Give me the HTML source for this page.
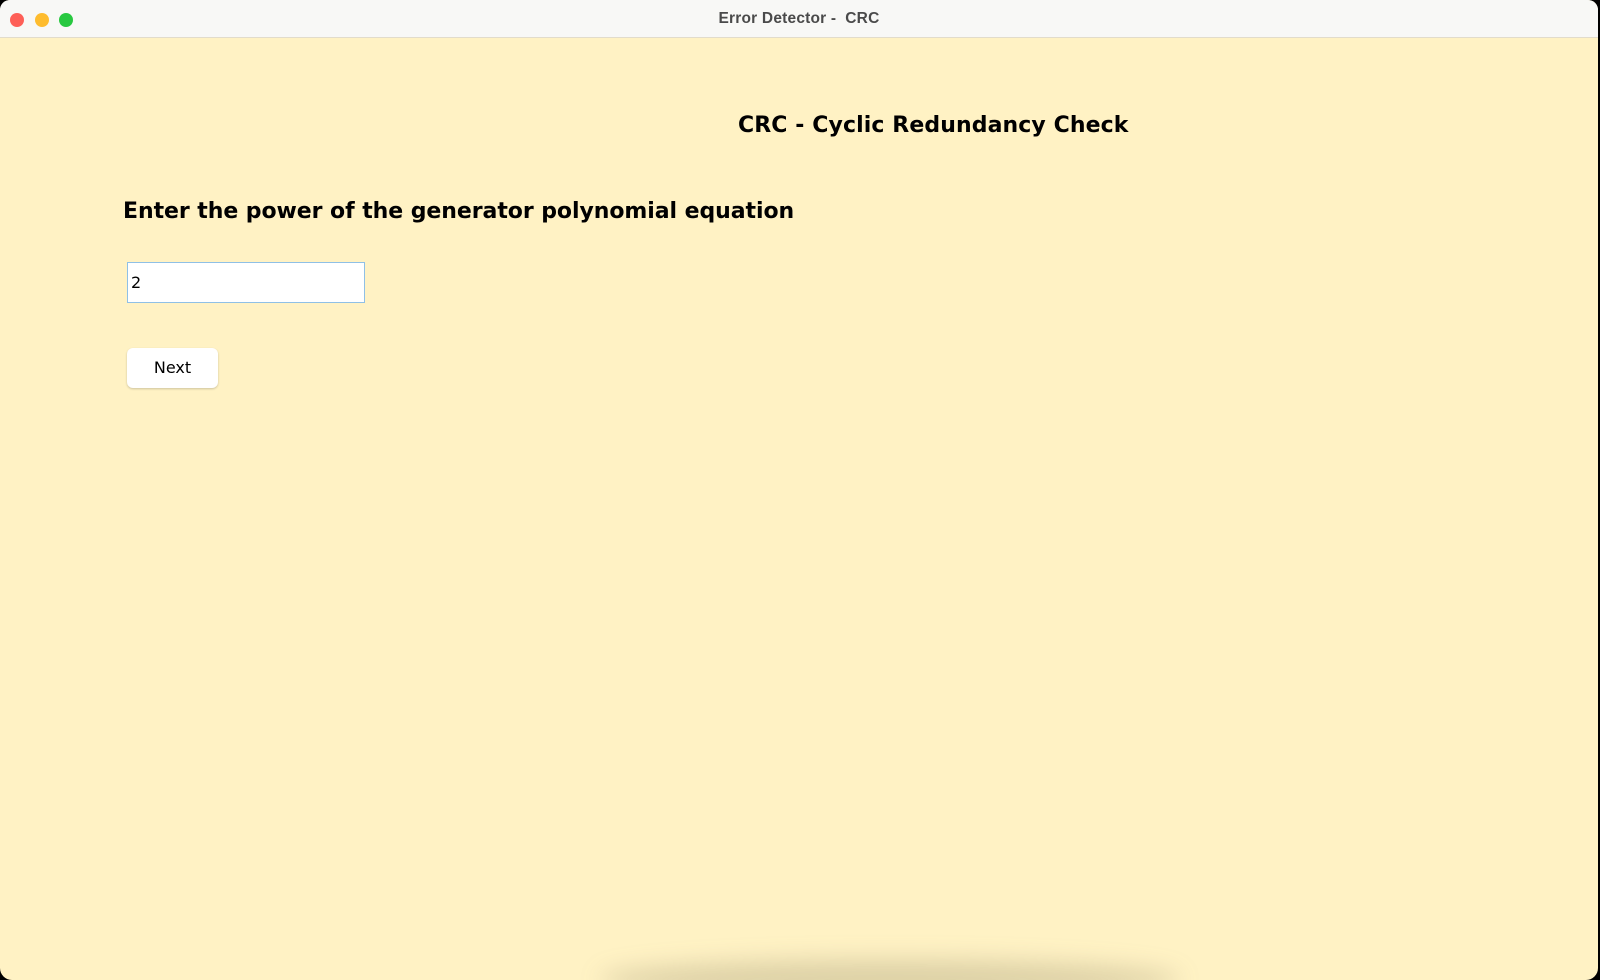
<!DOCTYPE html>
<html><head><style>
html,body{margin:0;padding:0;width:1600px;height:980px;overflow:hidden;background:#000;}
.win{position:absolute;left:0;top:0;width:1598px;height:980px;background:#fff2c4;border-radius:10px 10px 12px 12px;overflow:hidden;}
.bar{position:absolute;left:0;top:0;width:100%;height:37px;background:#f8f8f6;border-bottom:1px solid #e2dccb;}
.dot{position:absolute;top:13px;width:14px;height:14px;border-radius:50%;}
.t{position:absolute;left:0;width:100%;text-align:center;top:10px;font:bold 15.5px "Liberation Sans",sans-serif;color:#4a4a4a;letter-spacing:0.2px;}
.h{position:absolute;font-family:"DejaVu Sans",sans-serif;font-weight:bold;color:#000;white-space:nowrap;}
.inp{position:absolute;left:127px;top:262px;width:238px;height:41px;background:#fff;border:1px solid #8fc0e6;box-sizing:border-box;font:16px "DejaVu Sans",sans-serif;line-height:39px;padding-left:3px;}
.btn{position:absolute;left:127px;top:348px;width:91px;height:40px;background:#fff;border-radius:6px;box-shadow:0 1px 2px rgba(0,0,0,.2);text-align:center;font:16px "DejaVu Sans",sans-serif;line-height:40px;}
.sh{position:absolute;left:600px;top:960px;width:580px;height:40px;border-radius:50%;background:rgba(120,110,80,.25);filter:blur(12px);}
</style></head><body>
<div class="win">
<div class="bar">
<div class="dot" style="left:10px;background:#fe5f57"></div>
<div class="dot" style="left:35px;background:#febc2e"></div>
<div class="dot" style="left:59px;background:#28c840"></div>
<div class="t">Error Detector -&nbsp; CRC</div>
</div>
<div class="h" style="left:738px;top:113px;font-size:22px;letter-spacing:0.1px;">CRC - Cyclic Redundancy Check</div>
<div class="h" style="left:123px;top:199px;font-size:22px;letter-spacing:-0.06px;">Enter the power of the generator polynomial equation</div>
<div class="inp">2</div>
<div class="btn">Next</div>
<div class="sh"></div>
</div>
</body></html>
